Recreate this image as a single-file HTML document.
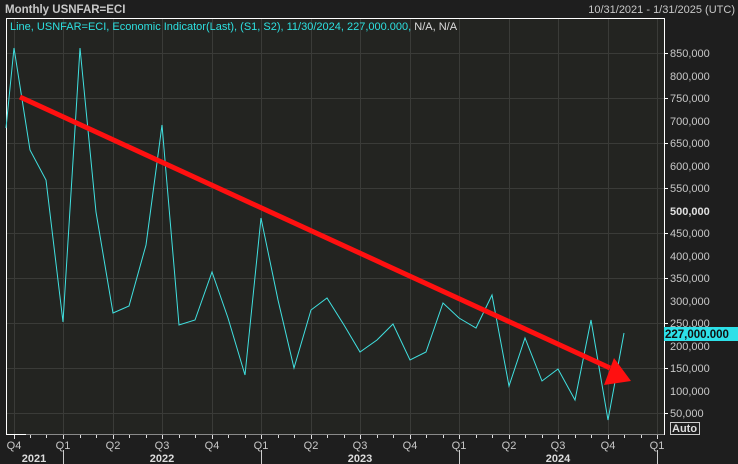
<!DOCTYPE html><html><head><style>
body{margin:0;width:738px;height:464px;background:#1e1e1e;overflow:hidden;font-family:"Liberation Sans",sans-serif;}
</style></head><body>
<svg width="738" height="464" xmlns="http://www.w3.org/2000/svg" style="position:absolute;left:0;top:0">
<rect width="738" height="464" fill="#1e1e1e"/>
<rect x="6" y="18" width="658" height="416" fill="#232421"/>
<g stroke="#3a3b38" stroke-width="1">
<line x1="6" y1="53.5" x2="664" y2="53.5"/><line x1="6" y1="98.5" x2="664" y2="98.5"/><line x1="6" y1="143.5" x2="664" y2="143.5"/><line x1="6" y1="188.5" x2="664" y2="188.5"/><line x1="6" y1="233.5" x2="664" y2="233.5"/><line x1="6" y1="278.5" x2="664" y2="278.5"/><line x1="6" y1="323.5" x2="664" y2="323.5"/><line x1="6" y1="368.5" x2="664" y2="368.5"/><line x1="6" y1="413.5" x2="664" y2="413.5"/>
<line x1="14.5" y1="18" x2="14.5" y2="434"/><line x1="63.5" y1="18" x2="63.5" y2="434"/><line x1="113.5" y1="18" x2="113.5" y2="434"/><line x1="162.5" y1="18" x2="162.5" y2="434"/><line x1="212.5" y1="18" x2="212.5" y2="434"/><line x1="261.5" y1="18" x2="261.5" y2="434"/><line x1="311.5" y1="18" x2="311.5" y2="434"/><line x1="360.5" y1="18" x2="360.5" y2="434"/><line x1="410.5" y1="18" x2="410.5" y2="434"/><line x1="459.5" y1="18" x2="459.5" y2="434"/><line x1="509.5" y1="18" x2="509.5" y2="434"/><line x1="558.5" y1="18" x2="558.5" y2="434"/><line x1="608.5" y1="18" x2="608.5" y2="434"/><line x1="657.5" y1="18" x2="657.5" y2="434"/>
</g>
<path d="M6 18.5H664.5V434.5H6" fill="none" stroke="#fff"/>
<line x1="6.5" y1="18" x2="6.5" y2="434" stroke="#fff"/>
<line x1="26" y1="434.5" x2="664" y2="434.5" stroke="#8a8a8a"/>
<g stroke="#ddd"><path d="M14.5 435v4M30.5 435v3M46.5 435v3M63.5 435v4M80.5 435v3M96.5 435v3M113.5 435v4M129.5 435v3M146.5 435v3M162.5 435v4M179.5 435v3M195.5 435v3M212.5 435v4M228.5 435v3M245.5 435v3M261.5 435v4M278.5 435v3M294.5 435v3M311.5 435v4M327.5 435v3M344.5 435v3M360.5 435v4M377.5 435v3M393.5 435v3M410.5 435v4M426.5 435v3M443.5 435v3M459.5 435v4M476.5 435v3M492.5 435v3M509.5 435v4M525.5 435v3M542.5 435v3M558.5 435v4M575.5 435v3M591.5 435v3M608.5 435v4M624.5 435v3M641.5 435v3M657.5 435v4"/>
<path d="M63.5 450v14M261.5 450v14M459.5 450v14M657.5 450v14" stroke="#ccc"/></g>
<g fill="#fff" stroke="#fff"><path d="M664 53.5h4M664 98.5h4M664 143.5h4M664 188.5h4M664 233.5h4M664 278.5h4M664 323.5h4M664 368.5h4M664 413.5h4"/></g>
<polyline fill="none" stroke="#40e0e0" stroke-width="1" points="6,128 14,48 30,150 46,180 63,322 80,48 96,212 113,313 129,306 146,245 162,125 179,325 195,320 212,272 228,318 245,375 261,218 278,300 294,368 311,310 327,298 344,325 360,352 377,340 393,324 410,360 426,352 443,303 459,318 476,328 492,295 509,386 525,338 542,381 558,369 575,400 591,320 608,420 624,333"/>
<line x1="20" y1="97" x2="610" y2="368" stroke="#ff1010" stroke-width="5"/>
<polygon points="631,381 604,385 614,358" fill="#ff1010"/>
<g font-size="11" fill="#c8c8c8">
<text x="670" y="57">850,000</text><text x="670" y="80">800,000</text><text x="670" y="102">750,000</text><text x="670" y="125">700,000</text><text x="670" y="147">650,000</text><text x="670" y="170">600,000</text><text x="670" y="192">550,000</text><text x="670" y="215" font-weight="bold" fill="#e0e0e0">500,000</text><text x="670" y="237">450,000</text><text x="670" y="260">400,000</text><text x="670" y="282">350,000</text><text x="670" y="305">300,000</text><text x="670" y="327">250,000</text><text x="670" y="350">200,000</text><text x="670" y="372">150,000</text><text x="670" y="395">100,000</text><text x="670" y="417">50,000</text>
</g>
<rect x="664" y="327" width="74" height="14" fill="#2de0e8"/>
<text x="665" y="338" font-size="11.5" font-weight="bold" fill="#111">227,000.000</text>
<rect x="670.5" y="422.5" width="29" height="12" fill="none" stroke="#ccc"/>
<text x="672" y="432" font-size="11" font-weight="bold" fill="#ddd">Auto</text>
<g font-size="11" fill="#c8c8c8" text-anchor="middle">
<text x="14" y="449">Q4</text><text x="63" y="449">Q1</text><text x="113" y="449">Q2</text><text x="162" y="449">Q3</text><text x="212" y="449">Q4</text><text x="261" y="449">Q1</text><text x="311" y="449">Q2</text><text x="360" y="449">Q3</text><text x="410" y="449">Q4</text><text x="459" y="449">Q1</text><text x="509" y="449">Q2</text><text x="558" y="449">Q3</text><text x="608" y="449">Q4</text><text x="657" y="449">Q1</text>
</g>
<g font-size="11" font-weight="bold" fill="#ddd" text-anchor="middle">
<text x="34" y="462">2021</text><text x="162" y="462">2022</text><text x="360" y="462">2023</text><text x="558" y="462">2024</text>
</g>
<text x="5" y="13" font-size="11.5" font-weight="bold" fill="#c8c8c8">Monthly USNFAR=ECI</text>
<text x="735" y="13" font-size="11" fill="#c8c8c8" text-anchor="end">10/31/2021 - 1/31/2025 (UTC)</text>
<text x="10" y="30" font-size="11" fill="#2de0e0">Line, USNFAR=ECI, Economic Indicator(Last), (S1, S2), 11/30/2024, 227,000.000, <tspan fill="#ddd">N/A, N/A</tspan></text>
</svg>
</body></html>
